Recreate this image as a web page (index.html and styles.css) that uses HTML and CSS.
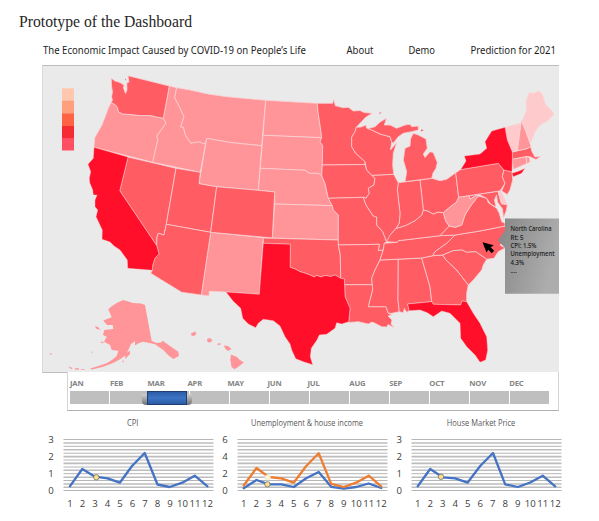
FILE: index.html
```html
<!DOCTYPE html>
<html lang="en">
<head>
<meta charset="utf-8">
<title>Prototype of the Dashboard</title>
<link rel="stylesheet" href="styles.css">
</head>
<body>
<h1 class="doc-title"><svg width="175" height="22"><text x="0" y="16" textLength="173" lengthAdjust="spacingAndGlyphs">Prototype of the Dashboard</text></svg></h1>
<main class="dashboard">
  <header class="topbar">
    <svg width="517" height="18" viewBox="42 41 517 18">
      <text x="43" y="54" textLength="263" lengthAdjust="spacingAndGlyphs">The Economic Impact Caused by COVID-19 on People’s Life</text>
      <text x="346.5" y="54" textLength="27" lengthAdjust="spacingAndGlyphs">About</text>
      <text x="408.5" y="54" textLength="26.5" lengthAdjust="spacingAndGlyphs">Demo</text>
      <text x="470.5" y="54" textLength="85.5" lengthAdjust="spacingAndGlyphs">Prediction for 2021</text>
    </svg>
  </header>
  <section class="map">
    <svg class="map-art" width="517" height="306" viewBox="42 66 517 306">
      <g class="legend">
        <rect x="62" y="88.3" width="12" height="12.2" fill="#ffc8ae"/>
        <rect x="62" y="100.5" width="12" height="12.8" fill="#ff9f7b"/>
        <rect x="62" y="113.3" width="12" height="12.7" fill="#ff6343"/>
        <rect x="62" y="126" width="12" height="12" fill="#f72b34"/>
        <rect x="62" y="138" width="12" height="12.5" fill="#ff4f62"/>
      </g>
      <g class="light">
        <path d="M111 102.5L115 104.5 117.5 107.5 118.5 112 123 114 131 114.5 139 115.5 150 115.5 163.3 118.3 166 123 156.7 136.3 158 139 152.7 162.3 94 147.3 94.7 137.7 102 125 108.3 108.3Z"/>
        <path d="M169.3 86L176.7 87.7 174.7 97.7 179 106 184 116.7 180.7 127 183.3 127 185.7 135.7 190.7 143 200 141.7 202.7 143.7 205.7 142.7 200.3 172.3 152.7 162.3 158 139 156.7 136.3 166 123 163.3 118.3Z"/>
        <path d="M176.7 87.7L190 90 208 94 226.7 96.7 265.7 100.3 261.7 145.7 230 142.5 206.7 138.3 205.7 142.7 202.7 143.7 200 141.7 190.7 143 185.7 135.7 183.3 127 180.7 127 184 116.7 179 106 174.7 97.7Z"/>
        <path d="M206.7 138.3L230 142.5 261.7 145.7 258.3 190.3 216.7 186.7 199 183.7Z"/>
        <path d="M265.7 100.3L317.3 103.3 318 112 320 125 321.7 137.7 263 135.3Z"/>
        <path d="M263 135.3L321.7 137.7 320 141.7 322.7 145.7 322.3 165 321.7 175.7 318.3 173.3 309.3 173.3 305 170.3 260.3 168.3Z"/>
        <path d="M260.3 168.3L305 170.3 309.3 173.3 318.3 173.3 321.7 175.7 325 183.3 327.3 194.3 328.3 198.3 332.3 205.7 274.7 204 274.7 192 258.3 190.3Z"/>
        <path d="M274.7 204L332.3 205.7 333.3 210 338.3 215 338.3 240 272.3 238Z"/>
        <path d="M210.7 232.3L263.3 237.7 259.3 294.3 226 292 209.3 291.3 209 296 201.3 295Z"/>
      </g>
      <g class="mid">
        <path d="M111.3 78.3L115 81 120 82.5 124 85 123.5 88 125.5 93.5 127 90 126.8 83 129 82 128 75.7 169.3 86 163.3 118.3 150 115.5 139 115.5 131 114.5 123 114 118.5 112 117.5 107.5 115 104.5 111 102.5 112.5 100 111.5 97 112.5 92 111.5 86Z"/>
        <path d="M128 157L176 168.3 166.3 224.3 164 235 158.3 233.3 157 237 156.7 245.7 119.7 190.7Z"/>
        <path d="M176 168.3L200.3 172.3 199 183.7 216.7 186.7 210.7 232.3 166.3 224.3Z"/>
        <path d="M216.7 186.7L258.3 190.3 274.7 192 272.3 238 210.7 232.3Z"/>
        <path d="M166.3 224.3L210.7 232.3 201.3 295 181.7 292.3 150.7 273.3 152.3 270.3 152.7 265 155 258 159 254 156.7 245.7 157 237 158.3 233.3 164 235Z"/>
        <path d="M263.3 238L338.3 240 338.3 245 340.3 255 340.7 278.3 335 275 331 276.5 325 275.5 321 277 316.7 275.5 314 277 310 275 306 273.5 300 271.7 295 269 290 267.3 290.3 244.3 263.3 243.3Z"/>
        <path d="M317.3 103.3L332.7 103.3 333.5 99 335.3 105.7 343.3 107.7 348.3 107.3 353.3 111 360 110.5 364 112.5 372.3 113.3 365.7 117.3 356.3 127.3 355 131.7 351.7 137.3 351.7 146.7 355.7 153.3 365 161.7 365 164.5 322.3 165 322.7 145.7 320 141.7 321.7 137.7 320 125 318 112Z"/>
        <path d="M322.3 165L365 164.5 366.7 170 371.7 175.3 375 178.3 374 185 368.3 188.3 369.3 193.3 366 198.3 363.3 197.3 328.3 198.3 325 183.3 321.7 175.7Z"/>
        <path d="M328.3 198.3L363.3 197.3 366 205 373.3 216 376.7 217 376.7 225 382.7 231.7 386.7 241.7 384.3 243.3 383.3 250 378.3 250.7 379.3 244.3 338.3 245 338.3 215 333.3 210 332.3 205.7Z"/>
        <path d="M338.3 245L379.3 244.3 378.3 250.7 383.3 250 380 260 375 270 371.7 278.3 372.3 284.7 344.7 284.7 344.3 279 340.7 278.3 340.3 255Z"/>
        <path d="M344.7 284.7L372.3 284.7 372.7 290 368.3 306.7 386 306.7 388.3 313.3 392 315 388 316 392 320 391 324 394 327.5 388 324.5 386.7 327 381.7 326.7 375 323.3 372 322 368.3 324 358.3 321.7 348.7 322.5 350 308.3 345 296.7Z"/>
        <path d="M380 260L398.3 259.3 398 300 399.3 311.7 391.7 313.3 388.3 313.3 386 306.7 368.3 306.7 372.7 290 372.3 284.7 371.7 278.3 375 270Z"/>
        <path d="M398.3 259.3L421.7 258 430 286.7 431.7 301.7 407.7 304 409.3 310.7 406.7 312.3 404.3 308.5 403.3 312.7 399.3 311.7 398 300Z"/>
        <path d="M421.7 258L432.7 255.7 442.7 255 446 260 456.7 270 468.3 285 466.7 293 466.7 301.7 462 301 460.7 305 433.3 304.3 431.7 301.7 430 286.7Z"/>
        <path d="M384.3 243.3L397.3 242.3 398.3 240.7 440 235.7 455 235 452 238 446.7 243.3 435 251.7 432.7 255.7 421.7 258 380 260 383.3 250Z"/>
        <path d="M455 235L480 231 505 226 507 233 505 240 500 245 505 248 498.3 251.7 494 258.3 486.7 259.3 475.7 251.7 466.7 252.3 461.7 250 453.3 250.7 442.7 255 432.7 255.7 435 251.7 446.7 243.3Z"/>
        <path d="M442.7 255L453.3 250.7 461.7 250 466.7 252.3 475.7 251.7 486.7 259.3 483.3 265 481.7 270 473.3 280 468.3 285 456.7 270 446 260Z"/>
        <path d="M386.7 241.7L385 239 390 235 396 228.3 401 227 406.7 225 415 220.7 421.7 215 423.3 210 428 211 433.3 214 438 212 443.3 212.7 446 221.7 449.3 226 440 235.7 398.3 240.7 397.3 242.3Z"/>
        <path d="M440 235.7L449.3 226 455 227.3 461.7 225 465 215 470 206.7 478.3 196 486.7 198.3 488.3 202.7 496.7 208.3 499.3 213.3 501.7 221.7 505 223.3 505 226 480 231 455 235Z"/>
        <path d="M420 180L431.7 178.3 440 180.7 446.7 179.3 455.7 172.7 458.7 197.3 456.7 202 450 207 443.3 212.7 438 212 433.3 214 428 211 423.3 210Z"/>
        <path d="M398.3 182.7L420 180 423.3 210 421.7 215 415 220.7 406.7 225 401 227 396 228.3 399.3 223 400 213 397.3 190Z"/>
        <path d="M371.7 175.3L393.7 174.3 398.3 182.7 397.3 190 400 213 399.3 223 396 228.3 390 235 386.7 241.7 382.7 231.7 376.7 225 376.7 217 373.3 216 366 205 363.3 197.3 366 198.3 369.3 193.3 368.3 188.3 374 185 375 178.3Z"/>
        <path d="M356.3 127.3L361 127 366 125 366.5 128 371.7 130 380 134 390 136.7 391.7 141.7 390.5 150 396.7 142.5 393.3 153.3 392.7 165 393.7 174.3 371.7 175.3 366.7 170 365 161.7 355.7 153.3 351.7 146.7 351.7 137.3 355 131.7Z"/>
        <path d="M371.7 130L368 128.5 375 126.7 380 122 386.5 118.3 384.3 125 390 125 396.7 128.3 405 125 410 124.3 411.7 126.7 418.3 126 418.3 130 411.7 131.7 403.3 133.3 398.3 136.7 393.3 143.3 391.7 141.7 390 136.7 380 134Z"/>
        <path d="M413.3 133.3L418.3 135 426 139 427.3 148.3 423.3 154 425 157.5 430 151.7 433.3 152.7 437.3 162.5 436 168.3 433 173 431.7 178.3 405 181.7 406.7 171.7 403.3 160 405 148.3 410 146 410.5 139Z"/>
        <path d="M455.7 172.7L460.7 169.5 498.3 163.3 504 170 502.3 176.7 505 183.3 500 191 458.7 197.3Z"/>
        <path d="M504 170L512 171.7 512.7 180 510 190 507.3 194.5 501.7 191 505 183.3 502.3 176.7Z"/>
        <path d="M512.3 152L526.7 148.7 530.7 146.7 532 151.7 535 157 540.7 156.5 536 159.5 530 156.7 526.7 156.5 512.3 159.3Z"/>
        <path d="M469.3 195.8L498 191.4 501.5 203.8 507.3 204.5 506.5 210 503.5 218 502.5 209 497.5 202 496.5 195 494.5 200 496 207 490.5 204 486.7 198.3 480 195 476.7 195 470 199.3Z"/>
        <path class="islet" d="M379 113L382 111.8 379.5 114ZM421 129.5L424 130 421 131.5ZM125 78.5L126.3 79.5 125.5 80.5Z"/>
      </g>
      <g class="light">
        <path d="M458.7 197.3L469.3 195.8 470 199.3 476.7 195 478.3 196 470 206.7 465 215 461.7 225 455 227.3 449.3 226 446 221.7 443.3 212.7 450 207 456.7 202Z"/>
        <path d="M521.3 120.7L526 132 530 143.3 531 146.7 526.7 148.7 517.3 150.7 519.3 135Z"/>
        <path d="M512.3 159.3L526.2 156.7 526.8 163.5 513.3 169.5Z"/>
        <path d="M526.2 156.7L529.5 157.5 530 162 526.8 163.5Z"/>
      </g>
      <g class="pale">
        <path d="M505 127.3L520.7 123.3 519.3 135 517.3 150.7 512.3 152 507.3 140Z"/>
        <path d="M522 121.5L526.7 110 526 101.7 529.3 92.7 534 93.3 538.3 91 542 93.5 545.7 105 550 109 554 114.3 546.7 121.7 543 123 540 125 535 131.7 530.7 142.5Z"/>
        <path d="M498 191.4L501 191.5 507.3 204.5 501.5 203.8Z"/>
      </g>
      <g class="red">
        <path d="M94 147.3L128 157 119.7 190.7 156.7 245.7 159 254 155 258 152.7 265 152.3 270.3 127.7 268.3 127.3 260 120 250 114 246 110 242 102 239.3 102.3 230 96 216.7 97.7 210 95 206.7 95 200 97 195 93.3 195 92.7 190 89.7 182.7 89.3 178 90.7 171.7 88 164.3 93.3 158.3Z"/>
        <path d="M263.3 243.3L290.3 244.3 290 267.3 295 269 300 271.7 306 273.5 310 275 314 277 316.7 275.5 321 277 325 275.5 331 276.5 335 275 340.7 278.3 344.3 279 345 296.7 350 308.3 348.7 321.7 341.7 324 336.7 322.7 335 328.3 326.7 334.3 319.3 335 317 340 311.3 348.3 310.3 356.7 312.7 364.7 303.3 361.7 295.7 358.7 291.7 350 290 344 285 336.7 280 326 273.3 320.7 263.3 319.3 258.3 323.3 255.7 327.7 248.3 324 242.7 318.3 240.7 308.3 233 301 226 292 259.3 294.3Z"/>
        <path d="M407.7 304L431.7 301.7 433.3 304.3 460.7 305 462 301 466.7 301.7 473.3 313.3 480 323.3 486.7 336.7 487.7 350 485.7 360 480 362.3 475 355 466.7 346.7 460.7 338.3 460 323.3 450 313.3 441.7 311 433.3 316.7 427.3 312.7 420 310 409.3 310.7Z"/>
        <path d="M460.7 169.5L466 161 464.3 156 480 154 486.7 148.3 485 141.7 491.7 131 505 127.3 507.3 140 512.3 152 512.3 159.3 512 171.7 504 170 498.3 163.3Z"/>
        <path d="M512 173.3L519 171 525 168.3 521.7 173.3 513.3 176.7Z"/>
      </g>
      <g class="light far">
        <path d="M123.3 300L133 303 141 303.5 145 305 151.7 341 156.7 343 161 342.5 162.7 340.7 170 346 178.3 351.7 179 356 173.3 359 168 355 163.3 350 155 344.3 143.3 341.7 139 343 135 345.5 135 341 131 344 128.3 350 126 355 120 359.3 113 363 103.3 366.7 92 369.5 90 368.5 97 366.5 106.7 363.3 112 360 116.7 356 118.3 350.7 111.7 350 110 345 104 341.7 106.7 336.7 103 335 104.3 330 113.3 329 112.7 325 107 325 103.3 320.5 111.7 317.3 108.3 309.3 112 306 116.7 303Z"/>
        <path d="M95 326L98 327 100.5 330 96 328.5ZM100.5 341.5L104 342 102 343.5ZM125.5 354L130 350.5 130 354 125 359ZM49.5 353.5L52 353.5 51 355ZM91 351.5L93 352 92 353ZM122 361.5L124.5 360 123 362.5ZM68 366.5L73 368 71 369ZM75 368L79 368.5 79 369.7 75 369.5ZM80 369L85 369 83 370Z"/>
        <path d="M191 333.5L195 331.5 196.5 334 194 336 191.5 335.5ZM207 339L210 338 212.5 340.5 210 342.5 207.5 342ZM217 344L220 343 221 344.5 218 345ZM224 345.5L228 346 231.5 349 228 351 225 348.5ZM231 354.5L237 357 240 360 243.8 362.5 238 367 234.5 369.2 231.5 367 230.3 359Z"/>
      </g>
      <path class="cursor" d="M482.5 242.2L493.8 245.2 490.6 247.2 494.2 250.8 491.8 253.2 488.3 249.7 486.5 252.5Z"/>
    </svg>
    <aside class="tip">
      <svg width="61" height="76" viewBox="498 218 61 76">
        <defs><linearGradient id="tipFill" x1="0" x2="1" y1="0" y2=".3"><stop offset="0" stop-color="#868686"/><stop offset="1" stop-color="#adadad"/></linearGradient></defs>
        <path d="M505 218.5H559V293.7H505V248L498 240.5 505 230.5Z" fill="url(#tipFill)"/>
        <text x="510.5" y="231" textLength="41" lengthAdjust="spacingAndGlyphs">North Carolina</text>
        <text x="510.5" y="239.5" textLength="13" lengthAdjust="spacingAndGlyphs">Rt: 5</text>
        <text x="510.5" y="248" textLength="26" lengthAdjust="spacingAndGlyphs">CPI: 1.5%</text>
        <text x="510.5" y="256.3" textLength="44" lengthAdjust="spacingAndGlyphs">Unemployment</text>
        <text x="510.5" y="264.7" textLength="13.5" lengthAdjust="spacingAndGlyphs">4.3%</text>
        <text x="510.5" y="273" textLength="6.5" lengthAdjust="spacingAndGlyphs">....</text>
      </svg>
    </aside>
  </section>
  <section class="timeline">
    <div class="months"><span>JAN</span><span>FEB</span><span>MAR</span><span>APR</span><span>MAY</span><span>JUN</span><span>JUL</span><span>AUG</span><span>SEP</span><span>OCT</span><span>NOV</span><span>DEC</span></div>
    <div class="track"><i></i><i></i><i></i><i></i><i></i><i></i><i></i><i></i><i></i><i></i><i></i><i></i><b class="thumb"></b></div>
  </section>
  <section class="charts">
    <svg width="174" height="100" viewBox="42 412 174 100">
      <text class="name" x="127" y="426" textLength="11.5" lengthAdjust="spacingAndGlyphs">CPI</text>
      <g class="thin"><path d="M63.5 439.5h150M63.5 446.3h150M63.5 453.2h150M63.5 460h150M63.5 467h150M63.5 473.7h150M63.5 480.5h150M63.5 490.5h150"/></g>
      <g class="thick"><path d="M63.5 443h150M63.5 449.8h150M63.5 456.6h150M63.5 463.4h150M63.5 470.2h150M63.5 477.2h150M63.5 484h150M63.5 487.2h150"/></g>
      <g class="axis"><text x="51" y="442.7">3</text><text x="51" y="459.7">2</text><text x="51" y="476.7">1</text><text x="51" y="493.7">0</text>
      <text x="70" y="507.3">1</text><text x="82.5" y="507.3">2</text><text x="95" y="507.3">3</text><text x="107.5" y="507.3">4</text><text x="120" y="507.3">5</text><text x="132.5" y="507.3">6</text><text x="145" y="507.3">7</text><text x="157.5" y="507.3">8</text><text x="170" y="507.3">9</text><text x="182.5" y="507.3">10</text><text x="195" y="507.3">11</text><text x="207.5" y="507.3">12</text></g>
      <polyline class="blue" points="70,486.2 82.3,469 95,476.7 107.5,478.3 119.8,482.7 132,466 144.7,453 157.5,484.5 169.7,487 182.3,482.7 194.7,475.7 207.5,486.3"/>
      <circle class="dot" cx="96.3" cy="477.3" r="2.7"/>
    </svg>
    <svg width="174" height="100" viewBox="216 412 174 100">
      <text class="name" x="251" y="426" textLength="112" lengthAdjust="spacingAndGlyphs">Unemployment &amp; house income</text>
      <g class="thin"><path d="M237.5 439.5h150M237.5 446.3h150M237.5 453.2h150M237.5 460h150M237.5 467h150M237.5 473.7h150M237.5 480.5h150M237.5 490.5h150"/></g>
      <g class="thick"><path d="M237.5 443h150M237.5 449.8h150M237.5 456.6h150M237.5 463.4h150M237.5 470.2h150M237.5 477.2h150M237.5 484h150M237.5 487.2h150"/></g>
      <g class="axis"><text x="225" y="442.7">6</text><text x="225" y="459.7">4</text><text x="225" y="476.7">2</text><text x="225" y="493.7">0</text>
      <text x="243.7" y="507.3">1</text><text x="256.2" y="507.3">2</text><text x="268.7" y="507.3">3</text><text x="281.2" y="507.3">4</text><text x="293.7" y="507.3">5</text><text x="306.2" y="507.3">6</text><text x="318.7" y="507.3">7</text><text x="331.2" y="507.3">8</text><text x="343.7" y="507.3">9</text><text x="356.2" y="507.3">10</text><text x="368.7" y="507.3">11</text><text x="381.2" y="507.3">12</text></g>
      <polyline class="blue" points="243.7,488.2 256.5,480 268.7,484.3 281.2,484.3 293.7,487 306.2,478.3 318.7,472 331.2,486.8 343.7,488.6 356.2,487 368.7,483.5 381.2,488"/>
      <polyline class="orange" points="243.7,485.5 256.5,468 268.7,477 281.2,478.3 293.7,482.7 306.2,466 318.7,453.3 331.2,483.9 343.7,487 356.2,482.7 368.7,475.7 381.2,486.3"/>
      <circle class="dot white" cx="267.7" cy="477.5" r="2.7"/><circle class="dot" cx="267.4" cy="484.3" r="2.7"/>
    </svg>
    <svg width="174" height="100" viewBox="390 412 174 100">
      <text class="name" x="446.8" y="426" textLength="68.5" lengthAdjust="spacingAndGlyphs">House Market Price</text>
      <g class="thin"><path d="M411.5 439.5h150M411.5 446.3h150M411.5 453.2h150M411.5 460h150M411.5 467h150M411.5 473.7h150M411.5 480.5h150M411.5 490.5h150"/></g>
      <g class="thick"><path d="M411.5 443h150M411.5 449.8h150M411.5 456.6h150M411.5 463.4h150M411.5 470.2h150M411.5 477.2h150M411.5 484h150M411.5 487.2h150"/></g>
      <g class="axis"><text x="399.3" y="442.7">3</text><text x="399.3" y="459.7">2</text><text x="399.3" y="476.7">1</text><text x="399.3" y="493.7">0</text>
      <text x="417.7" y="507.3">1</text><text x="430.2" y="507.3">2</text><text x="442.7" y="507.3">3</text><text x="455.2" y="507.3">4</text><text x="467.7" y="507.3">5</text><text x="480.2" y="507.3">6</text><text x="492.7" y="507.3">7</text><text x="505.2" y="507.3">8</text><text x="517.7" y="507.3">9</text><text x="530.2" y="507.3">10</text><text x="542.7" y="507.3">11</text><text x="555.2" y="507.3">12</text></g>
      <polyline class="blue" points="417.7,486.2 430.2,469 442.7,477.3 455.2,478.3 467.5,482.7 480.2,466 493,453 505.2,484.3 517.9,487 530.2,482.5 542.7,475.7 555.2,486.3"/>
      <circle class="dot" cx="441" cy="476.8" r="2.7"/>
    </svg>
  </section>
</main>
</body>
</html>
```
FILE: styles.css
```css
* { box-sizing: border-box; }
body { margin: 0; width: 599px; height: 521px; overflow: hidden; background: #fff; font-family: Lato, "Open Sans", sans-serif; }
svg { display: block; }
.doc-title { margin: 0; padding: 11px 0 0 19px; height: 41px; font: 400 16px "Liberation Serif", serif; }
.doc-title text { fill: #262626; }
.dashboard { margin-left: 42px; width: 522px; }
.topbar { height: 24px; }
.topbar text { font: 10.6px "Noto Sans", sans-serif; fill: #1c1c1c; }
.map { position: relative; width: 517px; height: 308px; background: #eaeaea; border-top: 1px solid #bcbcbc; border-bottom: 1px solid #bdbdbd; border-left: 1px solid #dadada; }
.map-art { margin-left: -1px; }
.map-art path { stroke: #f9d3d5; stroke-width: .75; stroke-linejoin: round; }
.light path { fill: #ff9599; }
.mid path { fill: #ff5c63; }
.pale path { fill: #ffcacc; }
.red path { fill: #ff0f29; }
.map-art .red path { stroke-width: .4; }
.map-art .far path, .map-art .islet, .map-art .cursor { stroke: none; }
.map-art .cursor { fill: #000; }
.tip { position: absolute; right: 0; top: 152px; }
.tip text { font: 600 6.6px "Open Sans", sans-serif; fill: #1f1f1f; }
.timeline { position: relative; margin: -1px 0 0 25px; width: 492px; height: 39px; padding: 5px 0 0 2px; background: #fff; border: 1px solid #d4d4d4; border-top: 0; border-bottom-color: #b0b0b0; }
.months, .track { display: grid; grid-template-columns: repeat(12, 40px); }
.months { height: 14px; font: 700 8.2px/12px "Noto Sans", sans-serif; font-size: 7.7px; color: #858585; letter-spacing: -.2px; }
.months span:nth-child(n+3):nth-child(-n+7) { margin-left: -2.5px; }
.months span:nth-child(n+8) { margin-left: -.7px; }
.track { position: relative; height: 13px; }
.track i { background: #bfbfbf; margin-right: 1px; }
.thumb { position: absolute; left: 77px; top: 0; width: 40px; height: 14px; background: linear-gradient(#2d5ca8, #3d74c4 50%, #2b5ba6); border: 1px solid #203f70; }
.thumb::before, .thumb::after { content: ""; position: absolute; top: 2px; width: 5px; height: 11px; background: linear-gradient(#d2d2d2, #707070); }
.thumb::before { left: -6px; border-radius: 0 0 0 4px; }
.thumb::after { right: -6px; border-radius: 0 0 4px 0; }
.charts { display: flex; width: 522px; padding-top: 1px; }
.name { font: 8.2px "Open Sans", sans-serif; fill: #595959; }
.axis text { font: 500 9.6px "Open Sans", sans-serif; fill: #404040; text-anchor: middle; }
.thin path { stroke: #b6b6b6; stroke-width: 1; }
.thick path { stroke: #bdbdbd; stroke-width: 1.6; }
.blue, .orange { fill: none; stroke: #4472c4; stroke-width: 2.3; stroke-linejoin: round; stroke-linecap: round; }
.orange { stroke: #ed7d31; }
.dot { fill: #ffe08a; stroke: #53606e; stroke-width: .7; }
.dot.white { fill: #fff3d6; stroke: #e8e2d8; }
```
